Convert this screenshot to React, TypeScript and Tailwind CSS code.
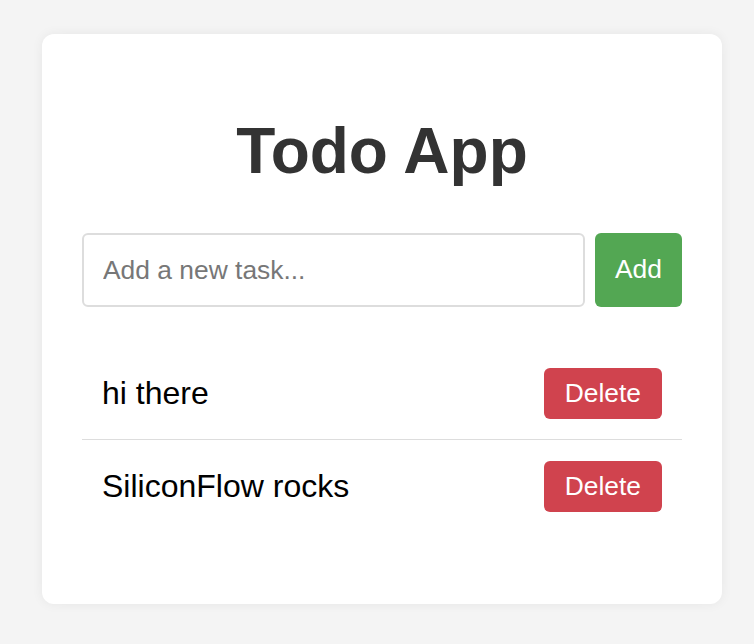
import type React from "react";

const todos = ["hi there", "SiliconFlow rocks"];

const TodoItem: React.FC<{ text: string }> = ({ text }) => (
  <li className="flex items-center justify-between border-b-[1.5px] border-[#dddddd] px-5 py-[20.5px] last:border-b-0">
    <span className="text-[32px] leading-[37px] text-black">{text}</span>
    <button className="rounded-md bg-[#d0434e] px-[21px] py-[10px] text-[26.4px] leading-[31px] text-white">
      Delete
    </button>
  </li>
);

export default function App() {
  return (
    <div className="min-h-screen bg-[#f4f4f4] pt-[34px] font-['Liberation_Sans',Arial,sans-serif]">
      <div className="mx-[42px] w-[680px] rounded-xl bg-white px-10 pt-10 pb-[72px] shadow-[0_0_12px_rgba(0,0,0,0.06)]">
        <h1 className="mt-[41px] mb-[45px] text-center text-[64px] leading-[73px] font-bold text-[#333333]">
          Todo App
        </h1>
        <div className="flex gap-[10px]">
          <input
            type="text"
            placeholder="Add a new task..."
            className="min-w-0 flex-1 rounded-md border-2 border-[#dddddd] px-[19px] py-5 text-[26.4px] leading-[30px] outline-none placeholder:text-[#777777]"
          />
          <button className="w-[87px] rounded-md bg-[#53a753] text-[26.4px] text-white">
            Add
          </button>
        </div>
        <ul className="mt-10">
          {todos.map((t) => (
            <TodoItem key={t} text={t} />
          ))}
        </ul>
      </div>
    </div>
  );
}
